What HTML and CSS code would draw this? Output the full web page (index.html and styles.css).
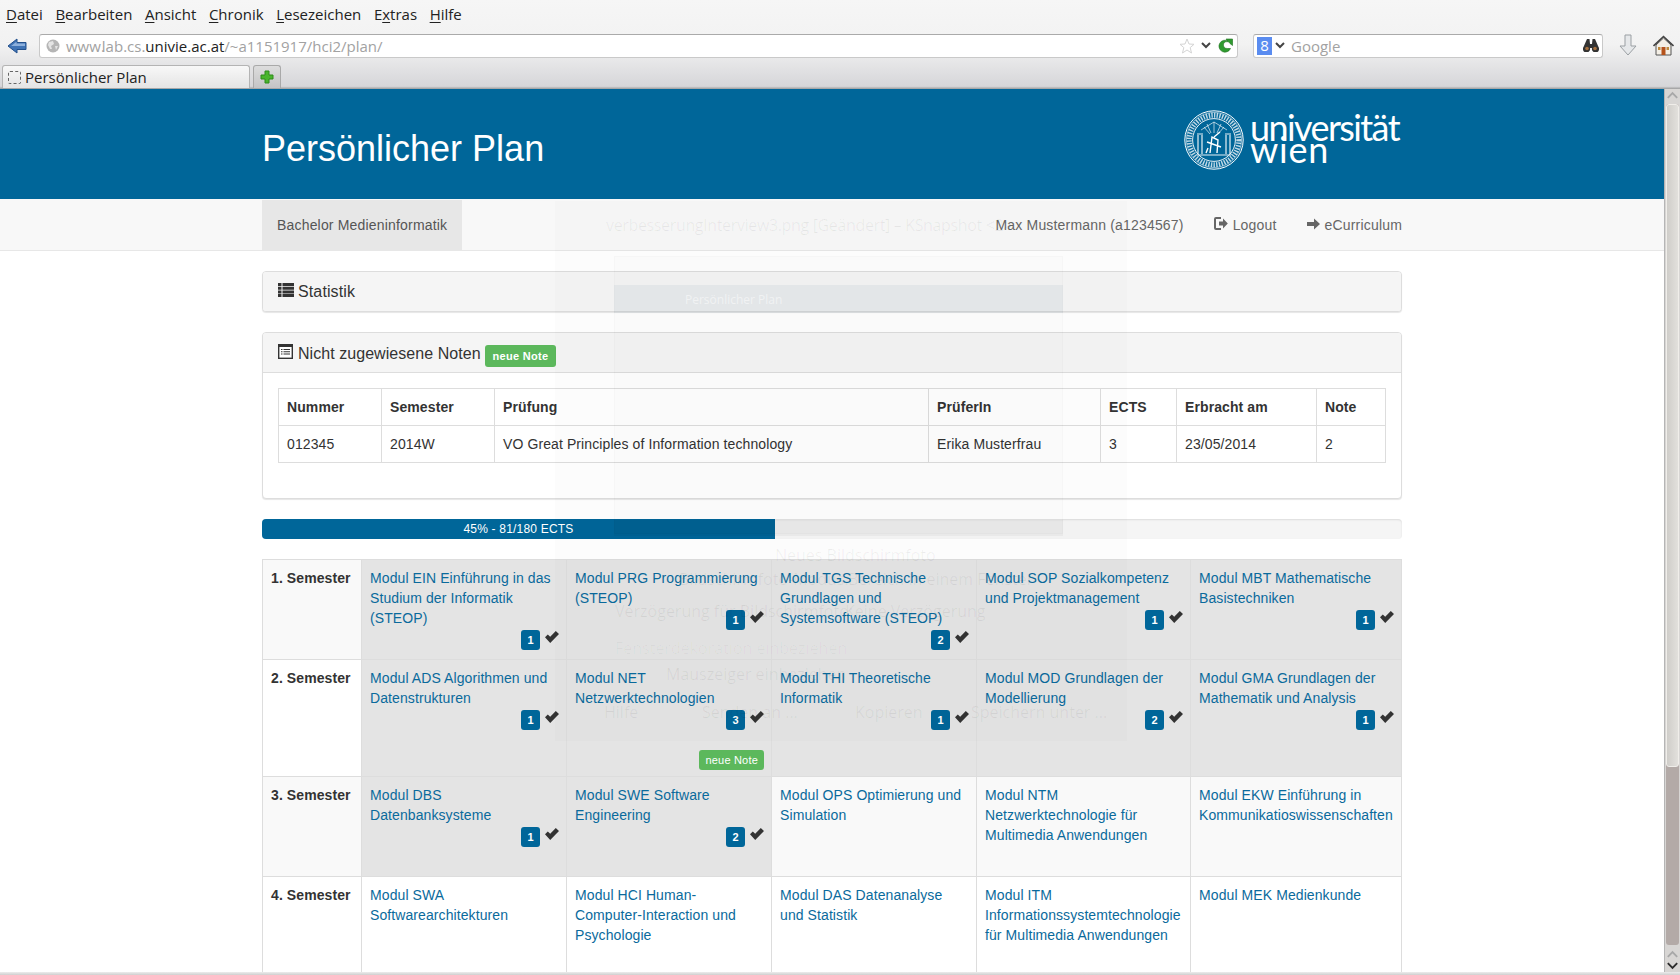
FILE: index.html
```html
<!DOCTYPE html>
<html>
<head>
	<meta charset="utf-8">
	<title>Persönlicher Plan</title>
	<link rel="stylesheet" href="styles.css">
</head>
<body>
	<svg class="defs" width="0" height="0">
		<symbol id="ok" viewBox="0 0 14 12"><path d="M0 6.2 L2.8 3.4 L5.2 5.8 L10.8 0 L14 3 L5.2 12 Z"/></symbol>
	</svg>

	<div class="chrome">
		<div class="menubar">
			<span><u>D</u>atei</span>
			<span><u>B</u>earbeiten</span>
			<span><u>A</u>nsicht</span>
			<span><u>C</u>hronik</span>
			<span><u>L</u>esezeichen</span>
			<span>E<u>x</u>tras</span>
			<span><u>H</u>ilfe</span>
		</div>
		<div class="toolbar">
			<svg class="back" width="20" height="16" viewBox="0 0 20 16"><path d="M1 8 L10 1 V4.5 H19 V11.5 H10 V15 Z" fill="#3f73b5" stroke="#23508c"/><path d="M4 8 L9.5 3.8 V5.5 H18 V8 Z" fill="#8db0dc"/></svg>
			<div class="urlbar">
				<svg class="globe" width="14" height="14" viewBox="0 0 14 14"><circle cx="7" cy="7" r="6.5" fill="#b5b5b5"/><path d="M3 3 L7 2 L8 5 L5 7 L6 10 L4 10 L2 6 Z M9 7 L12 7 L10 11 Z" fill="#e4e4e4"/></svg>
				<span class="url">www<span class="ghostdot">.</span>lab.cs.<b>univie.ac.at</b>/~a1151917/hci2/plan/</span>
				<svg class="star" width="16" height="16" viewBox="0 0 16 16"><path d="M8 1 L10 6 L15 6.3 L11.2 9.6 L12.5 15 L8 12 L3.5 15 L4.8 9.6 L1 6.3 L6 6 Z" fill="#fff" stroke="#d4d4d4"/></svg>
				<svg class="drop" width="10" height="7" viewBox="0 0 10 7"><path d="M1 1 L5 5 L9 1" fill="none" stroke="#444" stroke-width="2"/></svg>
				<svg class="reload" width="16" height="16" viewBox="0 0 16 16"><path d="M13.5 10.5 A6 6 0 1 1 11 3 L9 1 H15.5 V7.5 L13 5.5 A3.5 3.5 0 1 0 10.5 10.5 Z" fill="#2f9b2f" stroke="#1d6f1d" stroke-width=".6"/></svg>
			</div>
			<div class="searchbar">
				<span class="gbox">8</span>
				<svg class="drop" width="10" height="7" viewBox="0 0 10 7"><path d="M1 1 L5 5 L9 1" fill="none" stroke="#444" stroke-width="2"/></svg>
				<span class="gname">Google</span>
				<svg class="binoc" width="16" height="13" viewBox="0 0 16 13"><path d="M4 0 H6.5 L7 5 H9 L9.5 0 H12 L15.5 8 A3.6 3.6 0 1 1 9 9 H7 A3.6 3.6 0 1 1 0.5 8 Z" fill="#333"/><circle cx="4" cy="9.5" r="1.8" fill="#a5703f"/><circle cx="12" cy="9.5" r="1.8" fill="#a5703f"/></svg>
			</div>
			<svg class="down" width="18" height="24" viewBox="0 0 18 24"><path d="M6 1 H12 V12 H17 L9 21 L1 12 H6 Z" fill="#e6e8ea" stroke="#9a9fa3"/></svg>
			<svg class="home" width="21" height="21" viewBox="0 0 21 21"><path d="M3 10 V20 H18 V10 L10.5 3 Z" fill="#f4efe6" stroke="#555"/><path d="M0.5 11 L10.5 1.5 L20.5 11" fill="none" stroke="#444" stroke-width="1.6"/><rect x="8.5" y="12" width="4" height="8" fill="#b5531c"/><rect x="5" y="12" width="2.5" height="3" fill="#c08a3c"/><rect x="13.5" y="12" width="2.5" height="3" fill="#c08a3c"/></svg>
		</div>
		<div class="tabbar">
			<div class="tab"><span class="favicon"></span>Persönlicher Plan</div>
			<div class="newtab"><svg width="14" height="14" viewBox="0 0 14 14"><path d="M5 1 H9 V5 H13 V9 H9 V13 H5 V9 H1 V5 H5 Z" fill="#49b52c" stroke="#2f8a1a"/></svg></div>
		</div>
	</div>

	<div class="viewport">
		<div class="page">
			<header class="head">
				<div class="wrap headrow">
					<h1>Persönlicher Plan</h1>
					<div class="logo">
						<svg class="seal" width="60" height="60" viewBox="0 0 60 60">
							<g fill="none" stroke="#fff">
								<circle cx="30" cy="30" r="29.2" stroke-width="1"/>
								<circle cx="30" cy="30" r="24.8" stroke-width="5" stroke-dasharray="1.4 1.3" opacity=".75"/>
								<circle cx="30" cy="30" r="21.4" stroke-width=".9"/>
								<circle cx="30" cy="30" r="27.6" stroke-width=".5"/>
								<path d="M14 44 V25 M18 44 V25 M42 44 V25 M46 44 V25 M13 45 H47 M13 24 H19 M41 24 H47" stroke-width="1.2" opacity=".9"/>
								<path d="M17 20 L30 12 L43 20 M30 12 V23 M23 14 L27 23 M37 14 L33 23 M20 17 L26 24 M40 17 L34 24" stroke-width=".8" opacity=".8"/>
								<path d="M26 43 L28 27 L34 30 L33 43 M23 32 L37 37 M30 27 L36 22 M24 38 L22 43" stroke-width="1.4"/>
							</g>
						</svg>
						<div class="logotext">universität<br><span class="logowien">wien</span></div>
					</div>
				</div>
			</header>

			<nav class="topnav">
				<div class="wrap navrow">
					<a class="navactive">Bachelor Medieninformatik</a>
					<div class="navright">
						<a class="navuser">Max Mustermann (a1234567)</a>
						<a class="navlink"><svg width="14" height="13" viewBox="0 0 14 13"><path d="M7 1 H2 Q1 1 1 2 V11 Q1 12 2 12 H7" fill="none" stroke="#666" stroke-width="2"/><path d="M5 4.5 H9 V1.5 L13.8 6.5 L9 11.5 V8.5 H5 Z" fill="#666"/></svg>Logout</a>
						<a class="navlink"><svg width="13" height="12" viewBox="0 0 13 12"><path d="M0 4 H7 V0.5 L13 6 L7 11.5 V8 H0 Z" fill="#666"/></svg>eCurriculum</a>
					</div>
				</div>
			</nav>

			<main class="wrap">
				<section class="panel">
					<div class="panelhead">
						<svg class="hicon" width="16" height="14" viewBox="0 0 16 14"><path d="M0 0 H3.5 V3 H0 Z M4.5 0 H16 V3 H4.5 Z M0 3.7 H3.5 V6.7 H0 Z M4.5 3.7 H16 V6.7 H4.5 Z M0 7.4 H3.5 V10.4 H0 Z M4.5 7.4 H16 V10.4 H4.5 Z M0 11 H3.5 V14 H0 Z M4.5 11 H16 V14 H4.5 Z" fill="#333"/></svg>Statistik
					</div>
				</section>

				<section class="panel panel-noten">
					<div class="panelhead">
						<svg class="hicon" width="15" height="15" viewBox="0 0 15 15"><rect x=".7" y=".7" width="13.6" height="13.6" fill="#fff" stroke="#333" stroke-width="1.4"/><path d="M0 0 H15 V3 H0 Z M3 5 H4.5 V6 H3 Z M3 7.3 H4.5 V8.3 H3 Z M3 9.6 H4.5 V10.6 H3 Z M5.5 5 H12 V6 H5.5 Z M5.5 7.3 H12 V8.3 H5.5 Z M5.5 9.6 H12 V10.6 H5.5 Z" fill="#333"/></svg>Nicht zugewiesene Noten <span class="tag tag-big">neue Note</span>
					</div>
					<div class="panelbody">
						<table class="noten">
							<tr>
								<th>Nummer</th><th>Semester</th><th>Prüfung</th><th>PrüferIn</th><th>ECTS</th><th>Erbracht am</th><th>Note</th>
							</tr>
							<tr>
								<td>012345</td><td>2014W</td><td>VO Great Principles of Information technology</td><td>Erika Musterfrau</td><td>3</td><td>23/05/2014</td><td>2</td>
							</tr>
						</table>
					</div>
				</section>

				<div class="progress"><div class="bar" style="width: 45%">45% - 81/180 ECTS</div></div>

				<table class="plan">
					<tr>
						<th>1. Semester</th>
						<td class="done"><a>Modul EIN Einführung in das Studium der Informatik (STEOP)</a><div class="marks"><span class="num">1</span><svg class="ok"><use href="#ok"/></svg></div></td>
						<td class="done"><a>Modul PRG Programmierung (STEOP)</a><div class="marks"><span class="num">1</span><svg class="ok"><use href="#ok"/></svg></div></td>
						<td class="done"><a>Modul TGS Technische Grundlagen und Systemsoftware (STEOP)</a><div class="marks"><span class="num">2</span><svg class="ok"><use href="#ok"/></svg></div></td>
						<td class="done"><a>Modul SOP Sozialkompetenz und Projektmanagement</a><div class="marks"><span class="num">1</span><svg class="ok"><use href="#ok"/></svg></div></td>
						<td class="done"><a>Modul MBT Mathematische Basistechniken</a><div class="marks"><span class="num">1</span><svg class="ok"><use href="#ok"/></svg></div></td>
					</tr>
					<tr>
						<th>2. Semester</th>
						<td class="done"><a>Modul ADS Algorithmen und Datenstrukturen</a><div class="marks"><span class="num">1</span><svg class="ok"><use href="#ok"/></svg></div></td>
						<td class="done"><a>Modul NET Netzwerktechnologien</a><div class="marks"><span class="num">3</span><svg class="ok"><use href="#ok"/></svg></div><div class="newnote"><span class="tag">neue Note</span></div></td>
						<td class="done"><a>Modul THI Theoretische Informatik</a><div class="marks"><span class="num">1</span><svg class="ok"><use href="#ok"/></svg></div></td>
						<td class="done"><a>Modul MOD Grundlagen der Modellierung</a><div class="marks"><span class="num">2</span><svg class="ok"><use href="#ok"/></svg></div></td>
						<td class="done"><a>Modul GMA Grundlagen der Mathematik und Analysis</a><div class="marks"><span class="num">1</span><svg class="ok"><use href="#ok"/></svg></div></td>
					</tr>
					<tr>
						<th>3. Semester</th>
						<td class="done"><a>Modul DBS Datenbanksysteme</a><div class="marks"><span class="num">1</span><svg class="ok"><use href="#ok"/></svg></div></td>
						<td class="done"><a>Modul SWE Software Engineering</a><div class="marks"><span class="num">2</span><svg class="ok"><use href="#ok"/></svg></div></td>
						<td><a>Modul OPS Optimierung und Simulation</a><div class="marks"></div></td>
						<td><a>Modul NTM Netzwerktechnologie für Multimedia Anwendungen</a><div class="marks"></div></td>
						<td><a>Modul EKW Einführung in Kommunikatioswissenschaften</a><div class="marks"></div></td>
					</tr>
					<tr>
						<th>4. Semester</th>
						<td><a>Modul SWA Softwarearchitekturen</a><div class="marks"></div></td>
						<td><a>Modul HCI Human-Computer-Interaction und Psychologie</a><div class="marks"></div></td>
						<td><a>Modul DAS Datenanalyse und Statistik</a><div class="marks"></div></td>
						<td><a>Modul ITM Informationssystemtechnologie für Multimedia Anwendungen</a><div class="marks"></div></td>
						<td><a>Modul MEK Medienkunde</a><div class="marks"></div></td>
					</tr>
				</table>
			</main>

			<!-- faded KSnapshot window, mid fade-out on top of the page -->
			<div class="ghost">
				<div class="gh-title">verbesserungInterview3.png [Geändert] – KSnapshot &lt;2&gt;</div>
				<div class="gh-shot"></div>
				<div class="gh-shotbar"></div>
				<div class="gh-shothead">Persönlicher Plan</div>
				<div class="gh-taskbar"></div>
				<div class="gh-item gh-new">Neues Bildschirmfoto</div>
				<div class="gh-item gh-mode">Bildschirmfoto-Modus:</div>
				<div class="gh-item gh-area">Bereich in einem Fenster</div>
				<div class="gh-item gh-delay">Verzögerung für Bildschirmfoto:</div>
				<div class="gh-item gh-none">Keine Verzögerung</div>
				<div class="gh-item gh-deko">Fensterdekoration einbeziehen</div>
				<div class="gh-item gh-maus">Mauszeiger einbeziehen</div>
				<div class="gh-item gh-hilfe">Hilfe</div>
				<div class="gh-item gh-send">Senden an ...</div>
				<div class="gh-item gh-copy">Kopieren</div>
				<div class="gh-item gh-save">Speichern unter ...</div>
			</div>
		</div>

		<div class="scrollbar">
			<svg class="sarrow" width="16" height="10" viewBox="0 0 16 10"><path d="M3 8 L8 3 L13 8" fill="none" stroke="#a8a8a8" stroke-width="2"/></svg>
			<div class="strack"><div class="sthumb"></div></div>
			<svg class="sarrow" width="16" height="10" viewBox="0 0 16 10"><path d="M3 8 L8 3 L13 8" fill="none" stroke="#a8a8a8" stroke-width="2"/></svg>
			<svg class="sarrow" width="16" height="10" viewBox="0 0 16 10"><path d="M3 2 L8 7 L13 2" fill="none" stroke="#2c2c2c" stroke-width="2"/></svg>
		</div>
	</div>
	<div class="bottomedge"></div>
</body>
</html>
```

FILE: styles.css
```css
*
{
	box-sizing: border-box;
}
html, body
{
	height: 100%;
}
body
{
	margin: 0;
	overflow: hidden;
	font-family: "Liberation Sans", Arial, sans-serif;
	font-size: 14px;
	line-height: 20px;
	color: #333;
	background-color: #fff;
	display: flex;
	flex-direction: column;
}
.defs
{
	position: absolute;
}
u
{
	text-underline-offset: 2px;
}

/* browser window */
.chrome
{
	height: 89px;
	flex: none;
	font-family: "Open Sans", "Noto Sans", sans-serif;
	color: #222;
	background: linear-gradient(#f6f6f6, #f2f2f2 50%, #d6d6d9 97%, #9c9c9c);
}
.menubar
{
	height: 29px;
	padding: 4px 0 0 6px;
	display: flex;
	gap: 12.6px;
	font-size: 15px;
}
.toolbar
{
	height: 36px;
	display: flex;
	align-items: center;
	padding-bottom: 3px;
}
.back
{
	margin-left: 7px;
	margin-right: 12px;
}
.urlbar
{
	width: 1199px;
	height: 24px;
	display: flex;
	align-items: center;
	padding: 0 4px 0 6px;
	background-color: #fff;
	border: 1px solid #c9c9c9;
	border-top-color: #aaa;
	border-radius: 3px;
}
.globe
{
	margin-right: 6px;
}
.url
{
	flex: 1;
	font-size: 15px;
	color: #a2a2a2;
}
.url b
{
	font-weight: normal;
	color: #222;
}
.ghostdot
{
	letter-spacing: -3px;
}
.star
{
	margin-right: 6px;
}
.drop
{
	margin-right: 6px;
}
.searchbar
{
	width: 350px;
	height: 24px;
	margin-left: 15px;
	display: flex;
	align-items: center;
	padding: 0 3px 0 3px;
	background-color: #fff;
	border: 1px solid #c9c9c9;
	border-top-color: #aaa;
	border-radius: 3px;
}
.gbox
{
	width: 15px;
	height: 18px;
	margin-right: 3px;
	background-color: #5a8cf0;
	color: #fff;
	font-size: 15px;
	line-height: 17px;
	text-align: center;
}
.gname
{
	flex: 1;
	font-size: 15px;
	color: #a2a2a2;
}
.down
{
	margin-left: 16px;
}
.home
{
	margin-left: 16px;
}
.tabbar
{
	height: 24px;
	display: flex;
	gap: 3px;
	padding-left: 2px;
}
.tab
{
	width: 248px;
	height: 23px;
	padding-left: 5px;
	display: flex;
	align-items: center;
	font-size: 15px;
	background: linear-gradient(#f8f8f8, #e4e4e4);
	border: 1px solid #b4b4b4;
	border-bottom: 0;
	border-radius: 3px 3px 0 0;
}
.favicon
{
	width: 13px;
	height: 13px;
	margin-right: 4px;
	border: 1px dashed #666;
	border-radius: 2px;
}
.newtab
{
	width: 28px;
	height: 23px;
	display: flex;
	align-items: center;
	justify-content: center;
	background: linear-gradient(#ddd, #c4c4c6);
	border: 1px solid #a9a9a9;
	border-bottom: 0;
	border-radius: 3px 3px 0 0;
}

.viewport
{
	flex: 1;
	min-height: 0;
	display: flex;
}
.page
{
	flex: 1;
	min-width: 0;
	overflow: hidden;
	position: relative;
}
.wrap
{
	width: 1140px;
	margin: 0 auto;
}

/* blue head */
.head
{
	height: 110px;
	background-color: #006699;
	color: white;
}
.headrow
{
	height: 100%;
	display: flex;
	align-items: center;
	justify-content: space-between;
}
.head h1
{
	margin: 0;
	padding-top: 10px;
	font-size: 36px;
	font-weight: normal;
	line-height: 40px;
}
.logo
{
	display: flex;
	align-items: center;
	gap: 6px;
	margin-top: -8px;
}
.logotext
{
	width: 152px;
	font-family: Lato, sans-serif;
	font-size: 36px;
	line-height: 22px;
	letter-spacing: -1.6px;
	margin-top: -5px;
}
.logowien
{
	letter-spacing: .8px;
}

/* nav */
.topnav
{
	height: 52px;
	background-color: #f8f8f8;
	border-bottom: 1px solid #e7e7e7;
	color: #666;
}
.navrow
{
	height: 51px;
	display: flex;
	justify-content: space-between;
	align-items: center;
	letter-spacing: .18px;
}
.navactive
{
	height: 50px;
	margin-top: 1px;
	padding: 15px 15px;
	background-color: #e7e7e7;
	color: #555;
}
.navright
{
	display: flex;
	gap: 30px;
}
.navlink svg
{
	margin-right: 5px;
}

/* panels */
.panel
{
	margin-top: 20px;
	background-color: #fff;
	border: 1px solid #ddd;
	border-radius: 4px;
	box-shadow: 0 1px 1px rgba(0,0,0,.1);
}
.panelhead
{
	height: 39px;
	padding: 10px 15px;
	font-size: 16px;
	line-height: 20px;
	background-color: #f5f5f5;
	border-radius: 3px;
	letter-spacing: .12px;
}
.panel-noten .panelhead
{
	height: 40px;
	padding-top: 11px;
	letter-spacing: .05px;
	border-bottom: 1px solid #ddd;
	border-radius: 3px 3px 0 0;
}
.hicon
{
	margin-right: 4px;
}
.panel-noten .hicon
{
	margin-right: 5px;
}
.panelbody
{
	padding: 15px;
	height: 125px;
}
.tag
{
	display: inline-block;
	height: 20px;
	padding: 0 6px;
	margin-right: -1px;
	font-size: 11px;
	line-height: 20px;
	color: white;
	background-color: #5cb85c;
	border-radius: 3px;
	letter-spacing: .2px;
}
.tag-big
{
	height: 22px;
	margin-left: 0;
	font-weight: bold;
	line-height: 22px;
	padding: 0 7.5px;
	letter-spacing: .3px;
	vertical-align: -1px;
}

/* noten table */
.noten
{
	width: 100%;
	table-layout: fixed;
	border-collapse: collapse;
}
.noten th, .noten td
{
	height: 37px;
	padding: 8px;
	border: 1px solid #ddd;
	text-align: left;
	letter-spacing: .1px;
}
.noten th:nth-child(1) { width: 103px; }
.noten th:nth-child(2) { width: 113px; }
.noten th:nth-child(3) { width: 434px; }
.noten th:nth-child(4) { width: 172px; }
.noten th:nth-child(5) { width: 76px; }
.noten th:nth-child(6) { width: 140px; }

.progress
{
	height: 20px;
	margin-top: 20px;
	background-color: #f5f5f5;
	border-radius: 4px;
	box-shadow: inset 0 1px 2px rgba(0,0,0,.1);
	overflow: hidden;
}
.bar
{
	height: 100%;
	font-size: 12px;
	color: white;
	text-align: center;
	background-color: #006699;
	letter-spacing: .2px;
}

/* plan */
.plan
{
	width: 100%;
	margin-top: 20px;
	table-layout: fixed;
	border-collapse: collapse;
}
.plan th, .plan td
{
	padding: 8px;
	border: 1px solid #ddd;
	text-align: left;
	vertical-align: top;
	letter-spacing: .09px;
}
.plan th:nth-child(1) { width: 99px; }
.plan tr:first-child td:nth-child(2) { width: 205px; }
.plan tr:first-child td:nth-child(3) { width: 205px; }
.plan tr:first-child td:nth-child(4) { width: 205px; }
.plan tr:first-child td:nth-child(5) { width: 214px; }
.plan tr:nth-child(odd) th, .plan tr:nth-child(odd) td
{
	background-color: #f9f9f9;
}
.plan td.done, .plan tr:nth-child(odd) td.done
{
	background-color: #e4e4e4;
}
.plan a
{
	color: #0a6a9c;
}
.marks
{
	height: 23px;
	padding-top: 2px;
	margin-right: -1px;
	display: flex;
	justify-content: flex-end;
	align-items: flex-start;
}
.num
{
	width: 19px;
	height: 20px;
	font-size: 11px;
	font-weight: bold;
	line-height: 20px;
	text-align: center;
	color: white;
	background-color: #006699;
	border-radius: 3px;
}
.ok
{
	width: 14px;
	height: 12px;
	margin-top: 1px;
	margin-left: 5px;
	fill: #333;
}
.newnote
{
	height: 37px;
	padding-top: 18px;
	text-align: right;
}

/* faded window */
.ghost
{
	position: absolute;
	left: 555px;
	top: 112px;
	width: 572px;
	height: 540px;
	pointer-events: none;
	background-color: rgba(0,0,0,.012);
	font-family: "Open Sans", sans-serif;
	font-size: 16px;
	color: rgba(0,0,0,.06);
}
.ghost div
{
	position: absolute;
	white-space: nowrap;
}
.gh-title
{
	left: 51px;
	top: 14px;
	font-size: 16px;
	letter-spacing: -.35px;
}
.gh-shot
{
	left: 59px;
	top: 55px;
	width: 449px;
	height: 278px;
	border: 1px solid rgba(0,0,0,.015);
	background-color: rgba(0,0,0,.006);
}
.gh-shotbar
{
	left: 59px;
	top: 84px;
	width: 449px;
	height: 28px;
	background-color: rgba(0,60,100,.05);
}
.gh-shothead
{
	left: 130px;
	top: 89px;
	font-size: 12px;
	color: rgba(255,255,255,.5);
}
.gh-taskbar
{
	left: 59px;
	top: 319px;
	width: 449px;
	height: 16px;
	background-color: rgba(0,0,0,.035);
}
.gh-new
{
	left: 220px;
	top: 344px;
}
.gh-mode { left: 124px; top: 368px; }
.gh-area { left: 293px; top: 368px; }
.gh-delay { left: 60px; top: 400px; }
.gh-none { left: 290px; top: 400px; }
.gh-deko { left: 60px; top: 437px; color: rgba(0,0,0,.03); }
.gh-maus { left: 111px; top: 463px; }
.gh-hilfe { left: 49px; top: 501px; }
.gh-send { left: 147px; top: 501px; }
.gh-copy { left: 300px; top: 501px; }
.gh-save { left: 416px; top: 501px; }

/* scrollbar */
.scrollbar
{
	width: 16px;
	flex: none;
	display: flex;
	flex-direction: column;
	align-items: center;
	background-color: #d8d6d4;
	border-left: 1px solid #b5b5b5;
}
.sarrow
{
	flex: none;
	height: 12px;
	width: 15px;
}
.strack
{
	flex: 1;
	width: 13px;
	background-color: #b3aaa7;
	border-radius: 3px;
	margin: 3px 0;
}
.sthumb
{
	height: 663px;
	background: linear-gradient(90deg, #cfcdc9, #e2e0dc);
	border: 1px solid #f0eeea;
	border-radius: 3px;
}
.bottomedge
{
	height: 3px;
	flex: none;
	background: linear-gradient(#ececec, #cfcfcf);
}
```
